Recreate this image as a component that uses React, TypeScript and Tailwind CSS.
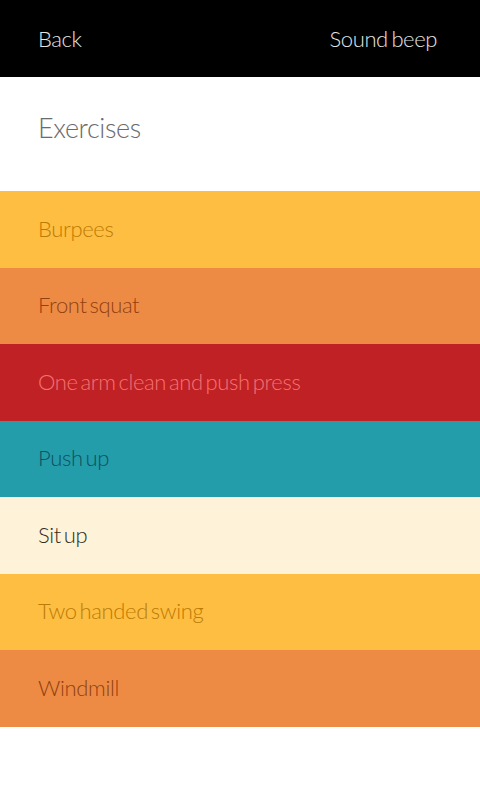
const exercises = [
  { name: 'Burpees', row: 'bg-[#febe42] text-[#bb7c05]' },
  { name: 'Front squat', row: 'bg-[#ed8b45] text-[#93410f]' },
  { name: 'One arm clean and push press', row: 'bg-[#c02124] text-[#f57272]' },
  { name: 'Push up', row: 'bg-[#249daa] text-[#0d5060]' },
  { name: 'Sit up', row: 'bg-[#fef3d9] text-[#332c20]' },
  { name: 'Two handed swing', row: 'bg-[#febe42] text-[#bb7c05]' },
  { name: 'Windmill', row: 'bg-[#ed8b45] text-[#93410f]' },
]

export default function App() {
  return (
    <div className="min-h-screen w-[480px] bg-white font-['Lato',sans-serif] font-light">
      <header className="h-[76.5px] bg-black flex items-center justify-between px-[38px] text-[22px] text-[#e4e4e4] tracking-[-0.4px] [word-spacing:-2px]">
        <span>Back</span>
        <span className="mr-[5px]">Sound beep</span>
      </header>

      <div className="h-[114.5px] flex items-center px-[38px]">
        <h1 className="text-[27px] text-[#6b6b6b] tracking-[-0.4px] -mt-[12px]">Exercises</h1>
      </div>

      <ul>
        {exercises.map((ex) => (
          <li key={ex.name} className={`h-[76.5px] flex items-center px-[38px] text-[22px] tracking-[-0.35px] [word-spacing:-2.8px] ${ex.row}`}>
            <span className="-mt-[2px]">{ex.name}</span>
          </li>
        ))}
      </ul>
    </div>
  )
}
